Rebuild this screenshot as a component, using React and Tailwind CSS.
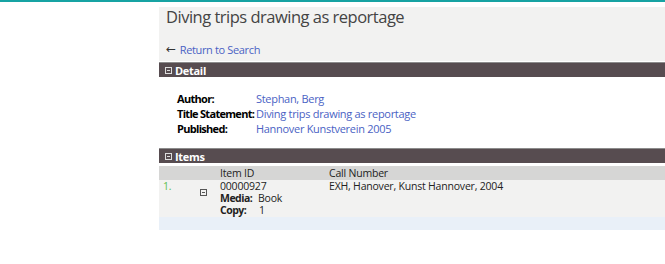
import React from "react";

const font = { fontFamily: "'Open Sans', 'DejaVu Sans', sans-serif" };

const BoxIcon = ({ light }) => (
  <span
    className={`inline-flex items-center justify-center w-[7px] h-[7px] border ${
      light ? "border-[#ddd]" : "border-[#555]"
    }`}
  >
    <span className={`block w-[3px] h-px ${light ? "bg-[#ddd]" : "bg-[#555]"}`} />
  </span>
);

const SectionBar = ({ title }) => (
  <div className="h-[15px] border-t border-[#8c8c8c] bg-[#574c50] flex items-center pl-[6px] gap-[3px]">
    <BoxIcon light />
    <span className="text-white font-bold text-[11px] leading-none tracking-[-0.3px]">{title}</span>
  </div>
);

export default function App() {
  return (
    <div
      className="w-[665px] h-[264px] bg-white border-t-2 border-[#17a3a3] flex overflow-hidden"
      style={font}
    >
      <div className="w-[159px] shrink-0" />
      <div className="flex-1 flex flex-col">
        {/* Title panel */}
        <div className="mt-[5px] h-[54px] bg-[#f2f2f1] pl-[7px] flex flex-col">
          <h1 className="text-[16.5px] leading-none text-[#444] mt-[2px] tracking-[-0.5px]">
            Diving trips drawing as reportage
          </h1>
          <div className="mt-auto mb-[6px] flex items-center gap-[4px] text-[11px] leading-none tracking-[-0.35px]">
            <span className="text-[#333] text-[12px]">←</span>
            <a className="text-[#4a62c4]">Return to Search</a>
          </div>
        </div>

        <div className="mt-px">
          <SectionBar title="Detail" />
        </div>

        {/* Detail */}
        <div className="pl-[18px] pt-[14px] text-[11px] leading-[15px] tracking-[-0.3px]">
          <div className="flex whitespace-nowrap">
            <span className="w-[79px] font-bold text-black tracking-[-0.7px]">Author:</span>
            <span className="text-[#4a62c4]">Stephan, Berg</span>
          </div>
          <div className="flex whitespace-nowrap">
            <span className="w-[79px] font-bold text-black tracking-[-0.7px]">Title Statement:</span>
            <span className="text-[#4a62c4]">Diving trips drawing as reportage</span>
          </div>
          <div className="flex whitespace-nowrap">
            <span className="w-[79px] font-bold text-black tracking-[-0.7px]">Published:</span>
            <span className="text-[#4a62c4]">Hannover Kunstverein 2005</span>
          </div>
        </div>

        <div className="mt-[12px]">
          <SectionBar title="Items" />
        </div>

        {/* Items table */}
        <div className="mt-[3px] text-[10.5px] text-[#222] tracking-[-0.2px] whitespace-nowrap">
          <div className="h-[14px] bg-[#d6d6d5] flex items-center leading-none">
            <span className="w-[61px]" />
            <span className="w-[109px]">Item ID</span>
            <span>Call Number</span>
          </div>
          <div className="h-[37px] bg-[#f2f2f1] flex leading-[12px]">
            <span className="w-[41px] pl-[4px] text-[#5bbf4a]">1.</span>
            <span className="w-[20px] pt-[3px]">
              <BoxIcon />
            </span>
            <div className="w-[109px] flex flex-col">
              <span>00000927</span>
              <span className="flex">
                <b className="w-[38px] tracking-[-0.5px]">Media:</b>
                <span>Book</span>
              </span>
              <span className="flex">
                <b className="w-[39px] tracking-[-0.5px]">Copy:</b>
                <span>1</span>
              </span>
            </div>
            <span>EXH, Hanover, Kunst Hannover, 2004</span>
          </div>
          <div className="h-[13px] bg-[#e9f0f8]" />
        </div>
      </div>
    </div>
  );
}
